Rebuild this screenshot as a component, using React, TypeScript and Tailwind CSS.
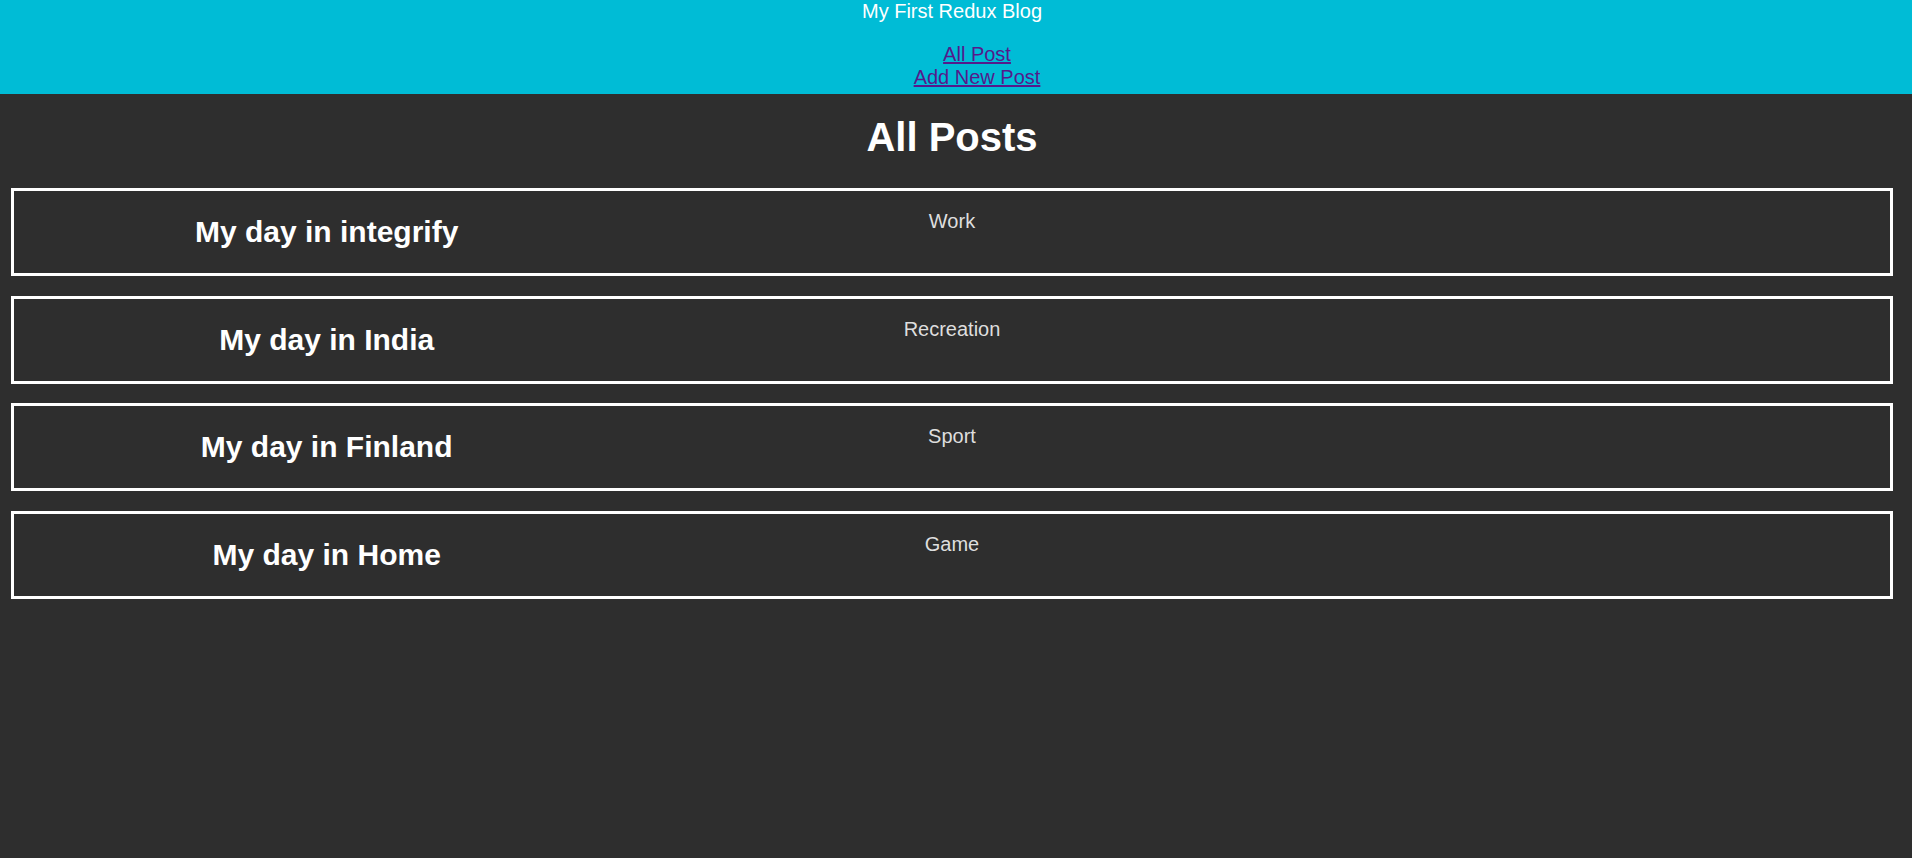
import React from 'react';

interface Post {
  id: number;
  title: string;
  category: string;
}

const posts: Post[] = [
  { id: 1, title: 'My day in integrify', category: 'Work' },
  { id: 2, title: 'My day in India', category: 'Recreation' },
  { id: 3, title: 'My day in Finland', category: 'Sport' },
  { id: 4, title: 'My day in Home', category: 'Game' },
];

const Header = () => {
  return (
    <header className="bg-[#00bcd6] h-[94px] pr-2 text-center">
      <div className="text-white text-[20px] leading-[23px]">My First Redux Blog</div>
      <ul className="mt-5 pl-[50px] text-[20px] leading-[23px]">
        <li>
          <a href="#" className="text-[#551a8b] underline">All Post</a>
        </li>
        <li>
          <a href="#" className="text-[#551a8b] underline">Add New Post</a>
        </li>
      </ul>
    </header>
  );
};

const PostCard = ({ post }: { post: Post }) => {
  return (
    <div className="grid grid-cols-3 items-start h-[88px] border-[3px] border-white">
      <h2 className="mt-6 text-center text-white font-bold text-[30px] leading-[34px]">{post.title}</h2>
      <p className="mt-[19px] text-center text-[#dedede] text-[20px] leading-[23px]">{post.category}</p>
    </div>
  );
};

const App = () => {
  return (
    <div className="min-h-screen bg-[#2e2e2e] font-['Liberation_Sans',Arial,sans-serif]">
      <Header />
      <main className="pr-2">
        <h1 className="mt-5 text-center text-white font-bold text-[40px] leading-[46px]">All Posts</h1>
        <div className="mt-7 mx-[11px] flex flex-col gap-[19.5px]">
          {posts.map((post) => (
            <PostCard key={post.id} post={post} />
          ))}
        </div>
      </main>
    </div>
  );
};

export default App;
